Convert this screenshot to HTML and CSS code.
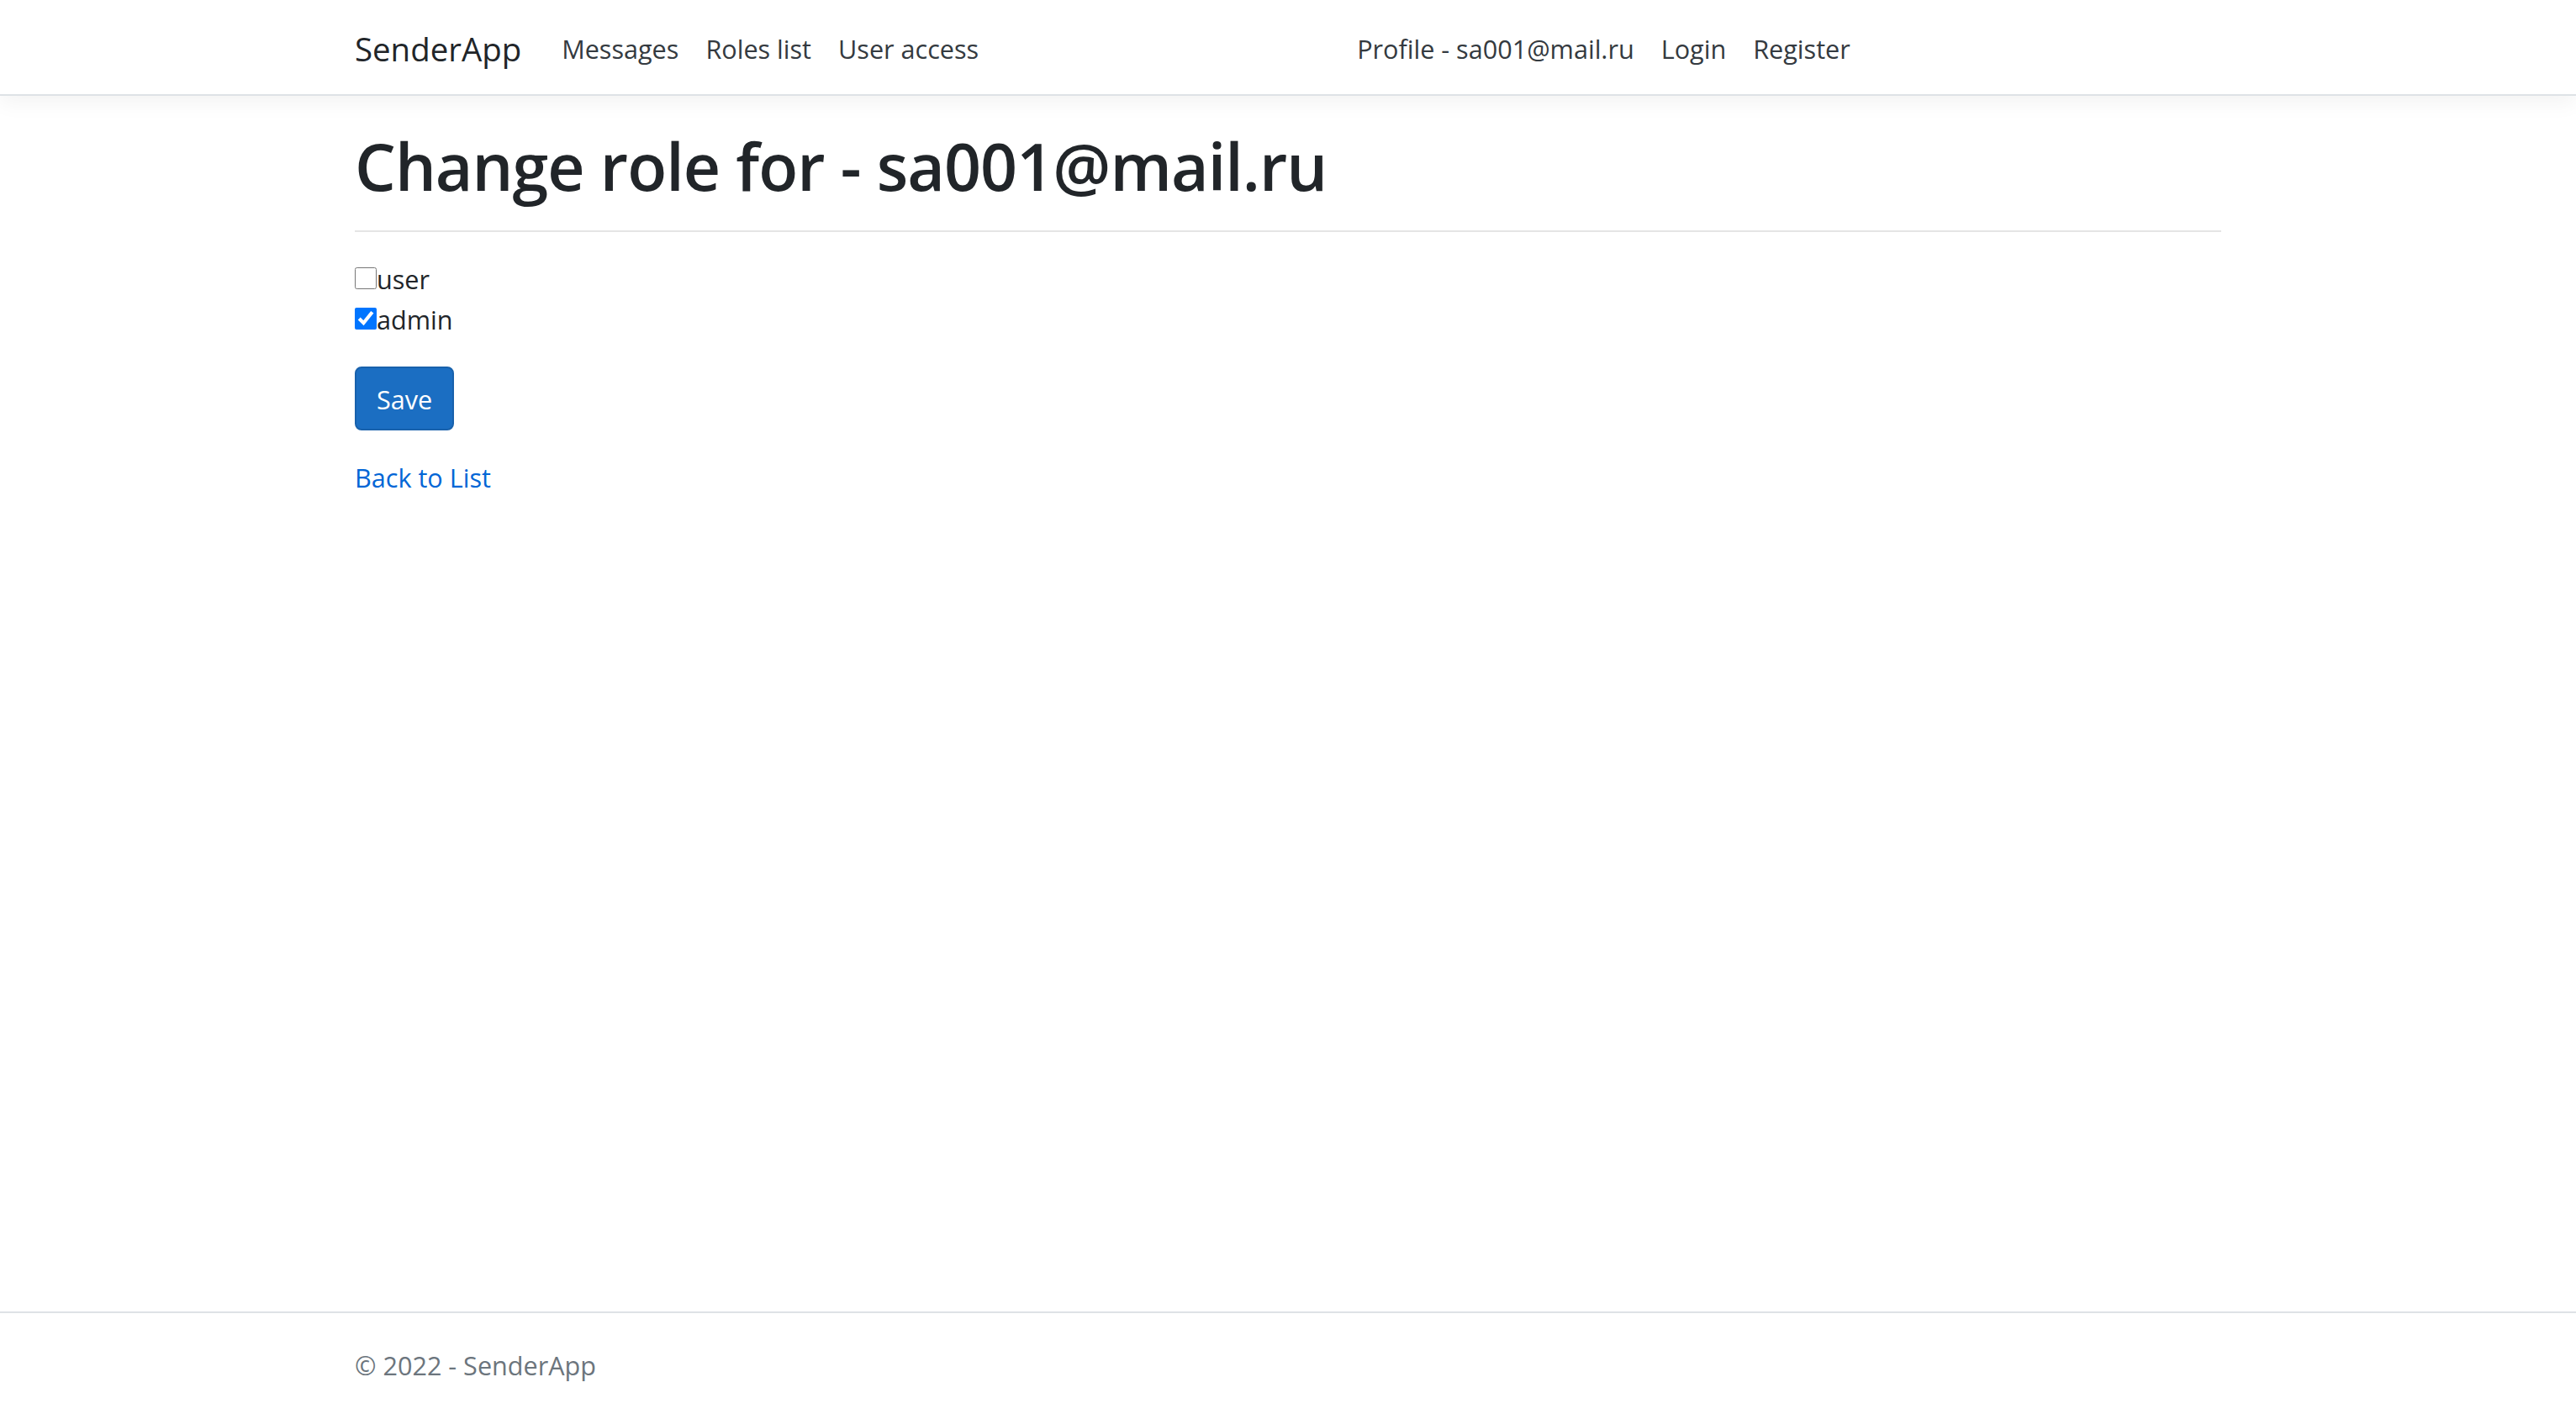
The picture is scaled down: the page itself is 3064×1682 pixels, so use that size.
FILE: index.html
```html
<!DOCTYPE html>
<html lang="en">
<head>
<meta charset="utf-8">
<title>Change role - SenderApp</title>
<link rel="stylesheet" href="styles.css">
</head>
<body>
<header class="site-header">
  <nav class="navbar">
    <div class="container navbar-inner">
      <a class="brand" href="#">SenderApp</a>
      <ul class="nav-list nav-main">
        <li><a class="nav-link" href="#">Messages</a></li>
        <li><a class="nav-link" href="#">Roles list</a></li>
        <li><a class="nav-link" href="#">User access</a></li>
      </ul>
      <ul class="nav-list nav-account">
        <li><a class="nav-link" href="#">Profile - sa001@mail.ru</a></li>
        <li><a class="nav-link" href="#">Login</a></li>
        <li><a class="nav-link" href="#">Register</a></li>
      </ul>
    </div>
  </nav>
</header>

<main class="container page">
  <h1 class="page-title">Change role for - sa001@mail.ru</h1>
  <hr class="divider">
  <form class="role-form">
    <div class="form-group">
      <label class="role"><input class="role-check" type="checkbox" name="roles" value="user">user</label>
      <label class="role"><input class="role-check" type="checkbox" name="roles" value="admin" checked>admin</label>
    </div>
    <div class="form-group">
      <button class="btn-primary" type="button">Save</button>
    </div>
  </form>
  <div>
    <a class="link" href="#">Back to List</a>
  </div>
</main>

<footer class="footer">
  <div class="container">© 2022 - SenderApp</div>
</footer>
</body>
</html>
```

FILE: styles.css
```css
* {
  box-sizing: border-box;
}

html, body {
  margin: 0;
  padding: 0;
}

body {
  min-height: 100vh;
  display: flex;
  flex-direction: column;
  font-family: "Open Sans", "Noto Sans", "Liberation Sans", sans-serif;
  font-size: 30.6px;
  line-height: 48px;
  color: #212529;
  background: #fff;
}

.container {
  width: 100%;
  max-width: 2280px;
  margin: 0 auto;
  padding: 0 30px;
}

/* Navbar */
.site-header {
  margin-bottom: 32px;
}

.navbar {
  background: #fff;
  border-bottom: 2px solid #dee2e6;
  box-shadow: 0 8px 24px rgba(0, 0, 0, 0.05);
  padding: 16px 32px;
}

.navbar-inner {
  display: flex;
  align-items: center;
}

.brand {
  display: inline-block;
  padding: 12px 0 8px;
  margin-right: 32px;
  font-size: 38.4px;
  line-height: 60px;
  color: #212529;
  text-decoration: none;
  white-space: nowrap;
}

.nav-list {
  list-style: none;
  margin: 0;
  padding: 0;
  display: flex;
}

.nav-main {
  width: 946px;
}

.nav-link {
  display: block;
  padding: 18px 16px 14px;
  color: #343a40;
  text-decoration: none;
  white-space: nowrap;
}

/* Page */
.page {
  flex: 1;
}

.page-title {
  margin: 0 0 12px;
  padding-top: 4px;
  font-size: 77px;
  line-height: 96px;
  font-weight: 600;
  letter-spacing: -0.012em;
}

.divider {
  margin: 28px 0 32px;
  border: 0;
  border-top: 2px solid rgba(0, 0, 0, 0.1);
  height: 0;
}

.role-form {
  margin: 0;
}

.form-group {
  margin-bottom: 32px;
}

.role {
  display: block;
}

.role-check {
  width: 26px;
  height: 26px;
  margin: 0;
}

.btn-primary {
  font-family: inherit;
  font-size: 30.6px;
  line-height: 48px;
  padding: 13px 24px 11px;
  color: #fff;
  background: #1b6ec2;
  border: 2px solid #1861ac;
  border-radius: 8px;
}

.link {
  color: #0366d6;
  text-decoration: none;
}

/* Footer */
.footer {
  border-top: 2px solid #dee2e6;
  padding-top: 4px;
  line-height: 116px;
  color: #6c757d;
  white-space: nowrap;
}
```
